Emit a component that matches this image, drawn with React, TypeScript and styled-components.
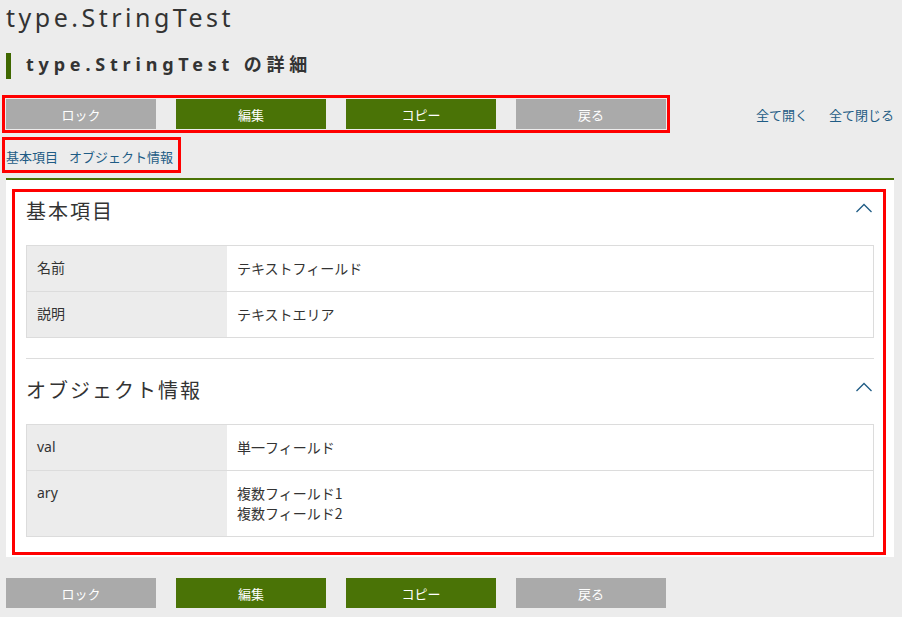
import React from "react";
import styled, { createGlobalStyle, css } from "styled-components";

const GlobalStyle = createGlobalStyle`
  html, body {
    margin: 0;
    padding: 0;
    background: #ececec;
    font-family: "Noto Sans", "Noto Sans CJK JP", sans-serif;
    color: #333;
  }
`;

const GREEN = "#4a7306";
const LINK = "#1f5c85";
const RED = "#ff0000";

const Page = styled.div`
  padding: 0 8px 9px 6px;
`;

const Title = styled.h1`
  margin: 0;
  font-size: 25px;
  line-height: 34px;
  font-weight: 400;
  letter-spacing: 3.5px;
  color: #333;
`;

const Heading = styled.h2`
  margin: 19px 0 0;
  border-left: 5px solid #3f6700;
  padding: 0 0 4px 15px;
  font-size: 18px;
  line-height: 22px;
  font-weight: 700;
  letter-spacing: 4.8px;
  color: #333;
`;

const Toolbar = styled.div<{ $top: number }>`
  display: flex;
  justify-content: space-between;
  align-items: center;
  margin-top: ${(p) => p.$top}px;
`;

const highlight = css`
  outline: 3px solid ${RED};
  outline-offset: 1px;
`;

const ButtonGroup = styled.div<{ $marked?: boolean }>`
  display: flex;
  gap: 20px;
  ${(p) => p.$marked && highlight}
`;

const Button = styled.button<{ $variant: "grey" | "green" }>`
  width: 150px;
  height: 30px;
  border: none;
  padding: 0;
  background: ${(p) => (p.$variant === "green" ? GREEN : "#aaaaaa")};
  color: #fff;
  font-family: "Noto Sans CJK JP", sans-serif;
  font-size: 13px;
  cursor: pointer;
`;

const ExpandLinks = styled.div`
  display: flex;
  gap: 21px;
`;

const Link = styled.a`
  color: ${LINK};
  font-family: "Noto Sans CJK JP", sans-serif;
  font-size: 13px;
  text-decoration: none;
  cursor: pointer;
`;

const NavRow = styled.div`
  display: flex;
  margin-top: 12px;
`;

const NavLinks = styled.nav`
  display: flex;
  gap: 11px;
  padding: 6px 4px 2px 0;
  line-height: 20px;
  ${highlight}
`;

const Panel = styled.div`
  margin-top: 9px;
  border-top: 2px solid ${GREEN};
  background: #fff;
  padding: 12px 11px 5px 9px;
`;

const PanelInner = styled.div`
  outline: 3px solid ${RED};
  padding: 0 9px 0 11px;
`;

const Section = styled.section`
  padding-bottom: 20px;
  & + & {
    border-top: 1px solid #dddddd;
    padding-top: 12px;
  }
  &:last-child {
    padding-bottom: 15px;
  }
`;

const SectionHeader = styled.div`
  display: flex;
  justify-content: space-between;
  height: 37px;
`;

const SectionTitle = styled.h3`
  margin: 0;
  font-family: "Noto Sans CJK JP", sans-serif;
  font-size: 20px;
  line-height: 37px;
  font-weight: 400;
  letter-spacing: 2px;
  color: #333;
`;

const ToggleIcon = styled.svg`
  margin-top: 11px;
  margin-right: 2px;
  flex: none;
`;

const Table = styled.table`
  margin-top: 16px;
  width: 100%;
  border-collapse: collapse;
  border: 1px solid #dcdcdc;
  font-size: 14px;
  color: #333;
`;

const Row = styled.tr`
  border-bottom: 1px solid #dcdcdc;
`;

const Label = styled.th`
  width: 180px;
  background: #ececec;
  text-align: left;
  font-weight: 400;
  padding: 12px 10px 13px;
  line-height: 20px;
  vertical-align: top;
`;

const Value = styled.td`
  padding: 12px 10px 13px;
  line-height: 20px;
  vertical-align: top;
  font-family: "Noto Sans CJK JP", sans-serif;
`;

const Line = styled.div``;

const Chevron = () => (
  <ToggleIcon width="16" height="10" viewBox="0 0 16 10">
    <polyline points="0.5,9 8,1.5 15.5,9" fill="none" stroke={LINK} strokeWidth="1.3" />
  </ToggleIcon>
);

type Item = { label: string; values: string[] };

const sections: { title: string; items: Item[] }[] = [
  {
    title: "基本項目",
    items: [
      { label: "名前", values: ["テキストフィールド"] },
      { label: "説明", values: ["テキストエリア"] },
    ],
  },
  {
    title: "オブジェクト情報",
    items: [
      { label: "val", values: ["単一フィールド"] },
      { label: "ary", values: ["複数フィールド1", "複数フィールド2"] },
    ],
  },
];

const Buttons = ({ marked }: { marked?: boolean }) => (
  <ButtonGroup $marked={marked}>
    <Button $variant="grey">ロック</Button>
    <Button $variant="green">編集</Button>
    <Button $variant="green">コピー</Button>
    <Button $variant="grey">戻る</Button>
  </ButtonGroup>
);

export default function App() {
  return (
    <>
      <GlobalStyle />
      <Page>
        <Title>type.StringTest</Title>
        <Heading>type.StringTest の詳細</Heading>
        <Toolbar $top={20}>
          <Buttons marked />
          <ExpandLinks>
            <Link>全て開く</Link>
            <Link>全て閉じる</Link>
          </ExpandLinks>
        </Toolbar>
        <NavRow>
          <NavLinks>
            <Link>基本項目</Link>
            <Link>オブジェクト情報</Link>
          </NavLinks>
        </NavRow>
        <Panel>
          <PanelInner>
            {sections.map((s) => (
              <Section key={s.title}>
                <SectionHeader>
                  <SectionTitle>{s.title}</SectionTitle>
                  <Chevron />
                </SectionHeader>
                <Table>
                  <tbody>
                    {s.items.map((it) => (
                      <Row key={it.label}>
                        <Label>{it.label}</Label>
                        <Value>
                          {it.values.map((v) => (
                            <Line key={v}>{v}</Line>
                          ))}
                        </Value>
                      </Row>
                    ))}
                  </tbody>
                </Table>
              </Section>
            ))}
          </PanelInner>
        </Panel>
        <Toolbar $top={21}>
          <Buttons />
        </Toolbar>
      </Page>
    </>
  );
}
